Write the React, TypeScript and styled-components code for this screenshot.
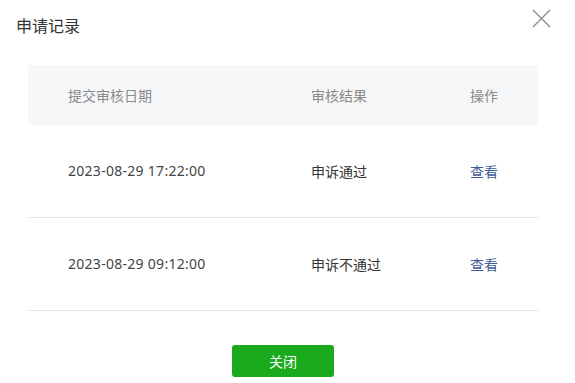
import { createGlobalStyle, styled } from "styled-components";

const GlobalStyle = createGlobalStyle`
  html, body {
    margin: 0;
    padding: 0;
    background: #fff;
  }
  body {
    font-family: "Noto Sans", "Noto Sans CJK SC", sans-serif;
    color: #333;
  }
`;

const Dialog = styled.div`
  width: 575px;
  height: 383px;
  box-sizing: border-box;
  display: flex;
  flex-direction: column;
  background: #fff;
`;

const Header = styled.div`
  display: flex;
  justify-content: space-between;
  align-items: flex-start;
  height: 65px;
  padding: 0 24px 0 16px;
  box-sizing: border-box;
`;

const Title = styled.h2`
  margin: 15px 0 0;
  font-size: 16px;
  line-height: 20px;
  font-weight: normal;
  color: #333;
  font-family: "Noto Sans CJK SC", sans-serif;
`;

const CloseBtn = styled.button`
  margin-top: 9px;
  width: 19px;
  height: 19px;
  padding: 0;
  border: none;
  background: none;
  cursor: pointer;
  svg {
    display: block;
  }
`;

const Table = styled.div`
  margin: 0 37px 0 28px;
  display: flex;
  flex-direction: column;
`;

const Row = styled.div<{ $head?: boolean }>`
  display: grid;
  grid-template-columns: 243px 159px 1fr;
  align-items: center;
  height: ${(p) => (p.$head ? "60px" : "92px")};
  background: ${(p) => (p.$head ? "#f6f7f9" : "#fff")};
  border-bottom: ${(p) => (p.$head ? "none" : "1px solid #e6e6e6")};
`;

const Cell = styled.div<{ $tone?: "head" | "body" | "link" }>`
  padding-left: 40px;
  font-size: 14px;
  line-height: 20px;
  font-family: "Noto Sans CJK SC", sans-serif;
  color: ${(p) =>
    p.$tone === "head" ? "#8a8a8a" : p.$tone === "link" ? "#3f5c9a" : "#333"};
  cursor: ${(p) => (p.$tone === "link" ? "pointer" : "default")};
`;

const DateCell = styled(Cell)`
  font-family: "Noto Sans", "Noto Sans CJK SC", sans-serif;
  letter-spacing: 0.28px;
  color: #444;
`;

const Footer = styled.div`
  display: flex;
  justify-content: center;
  padding: 34px 37px 0 28px;
`;

const Button = styled.button`
  width: 102px;
  height: 32px;
  border: none;
  border-radius: 3px;
  background: #1aab1d;
  color: #fff;
  font-size: 14px;
  font-family: "Noto Sans CJK SC", sans-serif;
  cursor: pointer;
`;

const records = [
  { date: "2023-08-29 17:22:00", result: "申诉通过" },
  { date: "2023-08-29 09:12:00", result: "申诉不通过" },
];

export default function App() {
  return (
    <>
      <GlobalStyle />
      <Dialog>
        <Header>
          <Title>申请记录</Title>
          <CloseBtn aria-label="close">
            <svg width="19" height="19" viewBox="0 0 19 19">
              <path d="M1 1L18 18M18 1L1 18" stroke="#8c8c8c" strokeWidth="1.4" fill="none" />
            </svg>
          </CloseBtn>
        </Header>
        <Table>
          <Row $head>
            <Cell $tone="head">提交审核日期</Cell>
            <Cell $tone="head">审核结果</Cell>
            <Cell $tone="head">操作</Cell>
          </Row>
          {records.map((r) => (
            <Row key={r.date}>
              <DateCell>{r.date}</DateCell>
              <Cell>{r.result}</Cell>
              <Cell $tone="link">查看</Cell>
            </Row>
          ))}
        </Table>
        <Footer>
          <Button>关闭</Button>
        </Footer>
      </Dialog>
    </>
  );
}
